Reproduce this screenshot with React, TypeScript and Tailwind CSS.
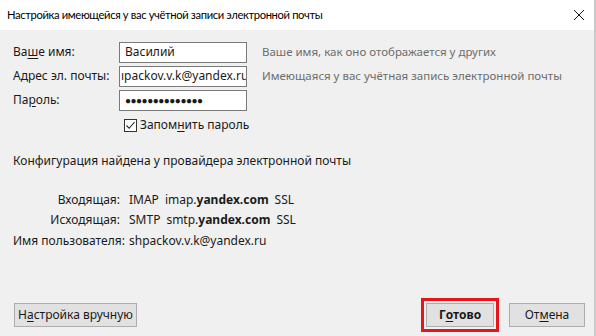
const font = { fontFamily: '"Noto Sans", "Open Sans", sans-serif' };

const U = ({ children }: { children: string }) => <span className="underline underline-offset-2">{children}</span>;

const Field = ({ label, value, hint }: { label: React.ReactNode; value: React.ReactNode; hint?: string }) => (
  <div className="flex h-[24px] items-center">
    <div className="w-[106px] shrink-0">{label}</div>
    <div className="flex h-[21px] w-[128px] shrink-0 items-center overflow-hidden border border-[#7a7a7a] bg-white pl-[5px] whitespace-nowrap">
      {value}
    </div>
    {hint && <div className="ml-[15px] text-[11.5px] text-[#6d6d6d]">{hint}</div>}
  </div>
);

const ServerRow = ({ label, children }: { label: string; children: React.ReactNode }) => (
  <div className="flex h-[19px] items-center">
    <div className="w-[107px] shrink-0 whitespace-nowrap text-right">{label}</div>
    <div className="ml-[9px] flex gap-[6px]">{children}</div>
  </div>
);

const Btn = ({ children, className = "" }: { children: React.ReactNode; className?: string }) => (
  <div className={`flex h-[24px] items-center justify-center border border-[#adadad] bg-[#e1e1e1] ${className}`}>
    {children}
  </div>
);

export default function App() {
  return (
    <div className="h-[336px] w-[596px] overflow-hidden bg-[#f0f0f0] text-[12px] text-[#1a1a1a]" style={font}>
      <div className="flex h-full flex-col border-r-2 border-[#c9c9c9]">
        <div className="flex h-[30px] shrink-0 items-center justify-between bg-white pl-[7px] pr-[8px]">
          <span
            className="text-[11.2px] tracking-[-0.35px] text-black"
            style={{ fontFamily: 'Lato, "Noto Sans", sans-serif' }}
          >
            Настройка имеющейся у вас учётной записи электронной почты
          </span>
          <svg width="12" height="12" viewBox="0 0 12 12" className="mr-[1px]">
            <path d="M1 1 L11 11 M11 1 L1 11" stroke="#111" strokeWidth="1" />
          </svg>
        </div>

        <div className="flex flex-1 flex-col pl-[13px] pt-[10px]">
          <Field label={<>Ва<U>ш</U>е имя:</>} value="Василий" hint="Ваше имя, как оно отображается у других" />
          <Field
            label="Адрес эл. почты:"
            value={<span className="-ml-[4px]">ıpackov.v.k@yandex.ru</span>}
            hint="Имеющаяся у вас учётная запись электронной почты"
          />
          <Field
            label={<>Па<U>р</U>оль:</>}
            value={<span className="text-[10px] tracking-[-0.5px]">●●●●●●●●●●●●●●</span>}
          />
          <div className="ml-[111px] mt-[4px] flex items-center gap-[3px]">
            <div className="flex h-[13px] w-[13px] items-center justify-center border border-[#333] bg-white">
              <svg width="11" height="11" viewBox="0 0 11 11">
                <path d="M1.5 5.5 L4.2 8.3 L9.5 2" fill="none" stroke="#222" strokeWidth="1.1" />
              </svg>
            </div>
            <span>Запом<U>н</U>ить пароль</span>
          </div>

          <div className="mt-[18px]">Конфигурация найдена у провайдера электронной почты</div>

          <div className="mt-[20px] flex flex-col gap-[1px]">
            <ServerRow label="Входящая:">
              <span>IMAP</span>
              <span>
                imap.<b>yandex.com</b>
              </span>
              <span>SSL</span>
            </ServerRow>
            <ServerRow label="Исходящая:">
              <span>SMTP</span>
              <span>
                smtp.<b>yandex.com</b>
              </span>
              <span>SSL</span>
            </ServerRow>
            <div className="mt-[1px]">
              <ServerRow label="Имя пользователя:">
                <span>shpackov.v.k@yandex.ru</span>
              </ServerRow>
            </div>
          </div>

          <div className="mt-auto mb-[4px] flex items-center pr-[9px]">
            <Btn className="ml-[1px] w-[123px]">
              Н<U>а</U>стройка вручную
            </Btn>
            <div className="ml-auto border-[3px] border-[#e8141c] p-[2px]">
              <Btn className="w-[68px] font-bold">
                Г<U>о</U>тово
              </Btn>
            </div>
            <Btn className="ml-[10px] w-[76px]">
              От<U>м</U>ена
            </Btn>
          </div>
        </div>
      </div>
    </div>
  );
}
